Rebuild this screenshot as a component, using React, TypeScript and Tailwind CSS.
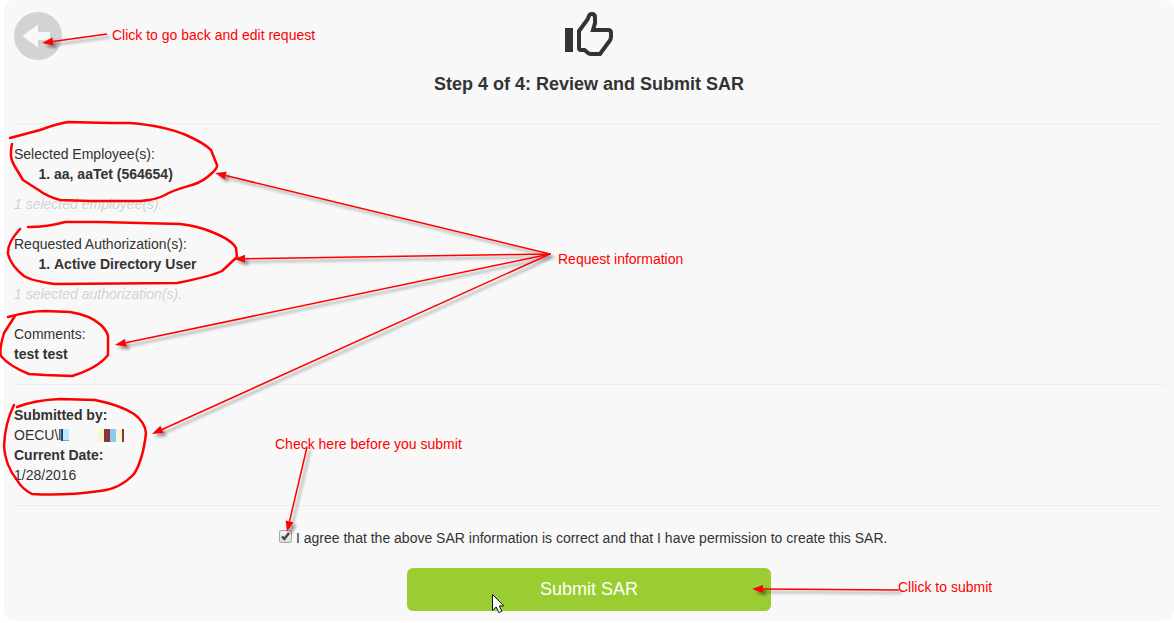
import { useState, type ReactNode } from 'react';

type Arrow = { from: [number, number]; to: [number, number] };

const arrows: Arrow[] = [
  { from: [107, 34], to: [42, 43] },
  { from: [550, 254], to: [215, 173] },
  { from: [551, 254], to: [234, 259] },
  { from: [550, 254], to: [115, 345] },
  { from: [550, 254], to: [152, 434] },
  { from: [307, 447], to: [287, 532] },
  { from: [899, 590], to: [752, 589] },
];

const loops = [
  'M10 138 L40 130 Q56 124 68 122 L110 123 L130 123 Q165 126 186 135 Q204 143 211 150 L217 165 Q218 169 206 178 C196 187 182 185 165 195 Q156 200 140 201 L90 201 L60 200 Q48 197 37 189 L23 180 L14 165 Q9 157 12 144',
  'M28 227 Q48 227 65 222 L100 222 L180 224 Q198 226 212 232 Q232 240 236 248 L237 257 L222 271 Q212 276 177 283 L55 284 Q32 281 24 276 Q11 266 8 254 Q7 243 20 229',
  'M8 317 Q30 311 45 311 L70 312 Q90 315 101 325 Q107 331 108 336 L108 355 Q98 368 72 376 L45 375 L29 374 Q9 366 1 356 Q-1 350 4 333 L15 316',
  'M17 407 Q35 400 60 399 L95 400 Q120 405 134 414 Q145 422 146 433 Q143 460 134 474 Q120 489 100 491 Q65 496 32 494 Q22 489 17 480 Q5 465 4 446 Q5 423 14 405',
];

function ArrowShape({ from, to }: Arrow) {
  const dx = to[0] - from[0];
  const dy = to[1] - from[1];
  const length = Math.hypot(dx, dy);
  const ux = dx / length;
  const uy = dy / length;
  const bx = to[0] - ux * 11;
  const by = to[1] - uy * 11;
  return (
    <g>
      <line x1={from[0]} y1={from[1]} x2={bx} y2={by} stroke="#f00" strokeWidth="1.5" />
      <polygon
        points={`${to[0]},${to[1]} ${bx - uy * 4},${by + ux * 4} ${bx + uy * 4},${by - ux * 4}`}
        fill="#f00"
      />
    </g>
  );
}

function Note({ className, children }: { className: string; children: ReactNode }) {
  return (
    <span className={`pointer-events-none absolute whitespace-nowrap text-sm leading-4 text-[#f00] ${className}`}>
      {children}
    </span>
  );
}

function Annotations() {
  return (
    <>
      <svg
        className="pointer-events-none absolute top-0 left-0 overflow-visible"
        width="1000"
        height="620"
        fill="none"
        aria-hidden="true"
      >
        <defs>
          <filter id="shadow" filterUnits="userSpaceOnUse" x="0" y="0" width="1000" height="620">
            <feDropShadow dx="3" dy="3" stdDeviation="1.5" floodColor="#000" floodOpacity="0.4" />
          </filter>
        </defs>
        {loops.map((d) => (
          <path key={d} d={d} stroke="#f00" strokeWidth="2.5" strokeLinecap="round" strokeLinejoin="round" />
        ))}
        <g filter="url(#shadow)">
          {arrows.map((a) => (
            <ArrowShape key={a.to.join()} {...a} />
          ))}
        </g>
        <path
          d="M492.5 594.5 v16 l3.7 -3.5 l2.6 5.6 l3 -1.3 l-2.5 -5.4 h4.5 Z"
          fill="#fff"
          stroke="#111"
          strokeWidth="1"
        />
      </svg>
      <Note className="top-[27px] left-[112px]">Click to go back and edit request</Note>
      <Note className="top-[251px] left-[558px]">Request information</Note>
      <Note className="top-[436px] left-[275px]">Check here before you submit</Note>
      <Note className="top-[579px] left-[898px]">Cllick to submit</Note>
    </>
  );
}

function BackIcon() {
  return (
    <svg width="48" height="48" viewBox="0 0 48 48" aria-hidden="true">
      <circle cx="24" cy="24" r="24" fill="#d3d3d3" />
      <path d="M8.5 24 L24 12.5 V20 H36 V28 H24 V35.5 Z" fill="#f8f8f8" />
    </svg>
  );
}

function ThumbIcon() {
  return (
    <svg width="50" height="48" viewBox="0 0 50 48" aria-hidden="true">
      <rect x="1" y="16" width="8" height="24" fill="#333" />
      <path
        d="M15 19 L23.5 7.5 L25.5 2.8 Q26.2 2 28 2 Q31 2 31 5.5 L31 11 L29 18 H44 Q47 18 47 21 V24.5 Q47 27 45.5 29 L36 42 H27 Q25 42 23.5 40.5 L20.5 38 H17 Q15 38 15 36 Z"
        fill="none"
        stroke="#333"
        strokeWidth="4"
        strokeLinejoin="miter"
      />
    </svg>
  );
}

function Mosaic() {
  return (
    <svg width="64" height="13" viewBox="0 0 64 13" aria-hidden="true">
      <rect width="2" height="12" fill="#293f7c" />
      <rect x="2" width="6" height="12" fill="#b8ebfb" />
      <rect x="2" y="11" width="6" height="1" fill="#58aee0" />
      <rect x="37" width="6" height="13" fill="#f9f6cd" />
      <rect x="43" width="6" height="13" fill="#853438" />
      <rect x="49" width="6" height="13" fill="#8ac8f5" />
      <rect x="55" width="6" height="13" fill="#f9f6cd" />
      <rect x="61" width="2" height="13" fill="#853438" />
    </svg>
  );
}

function Selection({ title, item, summary }: { title: string; item: string; summary: string }) {
  return (
    <section className="mb-5">
      <h2>{title}</h2>
      <ol className="mb-2.5 list-decimal pl-10 font-bold">
        <li>{item}</li>
      </ol>
      <p className="text-[#d3d3d3] italic">{summary}</p>
    </section>
  );
}

export default function App() {
  const [agreed, setAgreed] = useState(true);
  return (
    <div className="relative bg-white pl-1 font-['Liberation_Sans',Arial,sans-serif] text-sm leading-5 text-[#333]">
      <main className="rounded-[10px] bg-[#f8f8f8] px-2.5 pt-3 pb-2.5">
        <header className="grid grid-cols-[48px_1fr_48px] items-start">
          <button type="button" aria-label="Go back">
            <BackIcon />
          </button>
          <div className="flex flex-col items-center">
            <ThumbIcon />
            <h1 className="mt-3 text-lg leading-6 font-bold">Step 4 of 4: Review and Submit SAR</h1>
          </div>
        </header>

        <div className="mt-[27px] border-y border-[#eee] py-5">
          <Selection title="Selected Employee(s):" item="aa, aaTet (564654)" summary="1 selected employee(s)." />
          <Selection
            title="Requested Authorization(s):"
            item="Active Directory User"
            summary="1 selected authorization(s)."
          />
          <section>
            <h2>Comments:</h2>
            <p className="font-bold">test test</p>
          </section>
        </div>

        <dl className="border-b border-[#eee] py-5">
          <dt className="font-bold">Submitted by:</dt>
          <dd className="flex items-center">
            <span>OECU\l</span>
            <Mosaic />
          </dd>
          <dt className="font-bold">Current Date:</dt>
          <dd>1/28/2016</dd>
        </dl>

        <form className="flex flex-col items-center pt-[22px]" onSubmit={(e) => e.preventDefault()}>
          <label className="flex w-full max-w-[620px] items-center gap-1">
            <span className="grid shrink-0 pb-1">
              <input
                type="checkbox"
                checked={agreed}
                onChange={(e) => setAgreed(e.target.checked)}
                className="col-start-1 row-start-1 size-[13px] appearance-none rounded-xs border border-[#a6a6a6] bg-linear-to-b from-[#f0f0f0] to-[#dedede]"
              />
              {agreed && (
                <svg
                  className="pointer-events-none col-start-1 row-start-1"
                  width="13"
                  height="13"
                  viewBox="0 0 13 13"
                  aria-hidden="true"
                >
                  <path d="M3 6.5 L5.3 9 L10 3" fill="none" stroke="#444" strokeWidth="2.4" />
                </svg>
              )}
            </span>
            <span>I agree that the above SAR information is correct and that I have permission to create this SAR.</span>
          </label>
          <button
            type="submit"
            className="mt-5 h-[43px] w-full max-w-[364px] rounded-md bg-[#9acd32] pb-0.5 text-lg leading-6 text-white"
          >
            Submit SAR
          </button>
        </form>
      </main>
      <Annotations />
    </div>
  );
}
